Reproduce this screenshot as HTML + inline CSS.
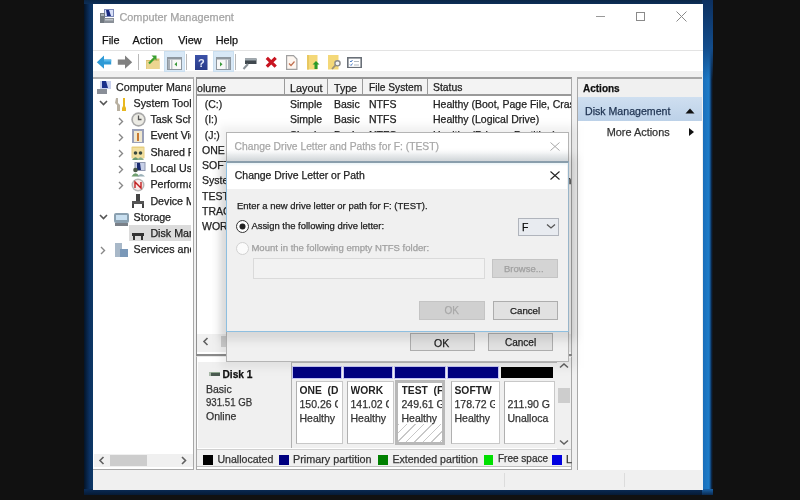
<!DOCTYPE html><html><head><meta charset="utf-8"><style>
html,body{margin:0;padding:0;width:800px;height:500px;overflow:hidden;background:#111;}
body{position:relative;font-family:"Liberation Sans", sans-serif;}
div,svg{position:absolute;}
.t{white-space:nowrap;-webkit-text-stroke:0.25px currentColor;}
</style></head><body>
<div id="root" style="left:0;top:0;width:800px;height:500px;overflow:hidden;background:#111;will-change:transform;filter:blur(0.4px);">
<div style="left:0px;top:0px;width:800px;height:500px;background:#111;"></div>
<div style="left:84px;top:0px;width:629px;height:495px;background:#0a2a50;"></div>
<div style="left:84px;top:0px;width:9px;height:495px;background:linear-gradient(90deg,#041428,#0b3060 60%,#0d3866);"></div>
<div style="left:84px;top:0px;width:629px;height:4px;background:linear-gradient(180deg,#0a2646,#0d2f58);"></div>
<div style="left:702px;top:0px;width:11px;height:495px;background:linear-gradient(90deg,#1a6cb8 0,#1e7cc8 60%,#1a6ab0 70%,#0a2a50 85%,#111 100%);"></div>
<div style="left:702px;top:0px;width:11px;height:80px;background:linear-gradient(180deg,#0c3060,#134d8c 60%,rgba(19,77,140,0));"></div>
<div style="left:84px;top:489px;width:629px;height:6px;background:linear-gradient(180deg,#0a2c58,#061a34);"></div>
<div style="left:702px;top:489px;width:11px;height:6px;background:linear-gradient(180deg,#1a62a8,#0a2a50);"></div>
<div style="left:92.5px;top:3.5px;width:610px;height:486.5px;background:#fff;"></div>
<svg style="left:100px;top:8px" width="15" height="16" viewBox="0 0 15 16"><rect x="4" y="1" width="10" height="8" fill="#7a88b8"/><rect x="5" y="2" width="8" height="6" fill="#d8e0f8"/><path d="M6 2 L9 2 L11 8 L7 8 Z" fill="#1a2a80"/><rect x="0" y="5" width="5" height="10" fill="#707880"/><rect x="1" y="6" width="3" height="2" fill="#a8b0b8"/><rect x="4" y="10" width="10" height="5" fill="#8a9098"/><rect x="5" y="11" width="8" height="1.5" fill="#c0c6cc"/></svg>
<div class="t" style="left:119.4px;top:12.17px;font-size:10.9px;line-height:10.9px;color:#a4a4a4;">Computer Management</div>
<div style="left:595.5px;top:16px;width:9px;height:1px;background:#999;"></div>
<div style="left:635.5px;top:12.2px;width:9.5px;height:8.8px;border:1px solid #8a8a8a;box-sizing:border-box;"></div>
<svg style="left:676px;top:11px" width="11" height="11" viewBox="0 0 11 11"><path d="M0.5 0.5 L10.5 10.5 M10.5 0.5 L0.5 10.5" stroke="#8a8a8a" stroke-width="1"/></svg>
<div class="t" style="left:102px;top:35.07px;font-size:10.9px;line-height:10.9px;color:#111;">File</div>
<div class="t" style="left:132.5px;top:35.07px;font-size:10.9px;line-height:10.9px;color:#111;">Action</div>
<div class="t" style="left:178.2px;top:35.07px;font-size:10.9px;line-height:10.9px;color:#111;">View</div>
<div class="t" style="left:215.7px;top:35.07px;font-size:10.9px;line-height:10.9px;color:#111;">Help</div>
<div style="left:93px;top:50px;width:610px;height:1px;background:#e3e3e3;"></div>
<div style="left:93px;top:51px;width:610px;height:20px;background:#fff;"></div>
<div style="left:93px;top:71px;width:610px;height:6px;background:#f0f0f0;"></div>
<div style="left:93px;top:77px;width:610px;height:413px;background:#f0f0f0;"></div>
<div style="left:93px;top:77px;width:101px;height:393px;background:#fff;border-top:2px solid #b0b0b0;border-right:1px solid #a8a8a8;border-bottom:1px solid #a8a8a8;box-sizing:border-box;"></div>
<div style="left:196px;top:77px;width:376px;height:279.5px;background:#fff;border:1px solid #a8a8a8;border-left:1.5px solid #909090;border-top:2px solid #959595;box-sizing:border-box;"></div>
<div style="left:197px;top:79px;width:374px;height:17px;background:#f3f3f3;border-bottom:2px solid #9a9a9a;box-sizing:border-box;"></div>
<div style="left:283.5px;top:79px;width:1.6px;height:16px;background:#9a9a9a;"></div>
<div style="left:326.5px;top:79px;width:1.6px;height:16px;background:#9a9a9a;"></div>
<div style="left:361.5px;top:79px;width:1.6px;height:16px;background:#9a9a9a;"></div>
<div style="left:426.5px;top:79px;width:1.6px;height:16px;background:#9a9a9a;"></div>
<div class="t" style="left:197px;top:83.03px;font-size:10.6px;line-height:10.6px;color:#222;">olume</div>
<div class="t" style="left:290px;top:82.86px;font-size:10.8px;line-height:10.8px;color:#222;">Layout</div>
<div class="t" style="left:334px;top:83.03px;font-size:10.6px;line-height:10.6px;color:#222;">Type</div>
<div class="t" style="left:369px;top:83.37px;font-size:10.2px;line-height:10.2px;color:#222;">File System</div>
<div class="t" style="left:433px;top:83.20px;font-size:10.4px;line-height:10.4px;color:#222;">Status</div>
<div style="left:197px;top:96px;width:374px;height:240px;overflow:hidden;"><div class="t" style="position:absolute;left:7.699999999999989px;top:2.91px;font-size:10.5px;line-height:10.5px;color:#222;">(C:)</div><div class="t" style="position:absolute;left:93px;top:2.91px;font-size:10.5px;line-height:10.5px;color:#222;">Simple</div><div class="t" style="position:absolute;left:137px;top:2.91px;font-size:10.5px;line-height:10.5px;color:#222;">Basic</div><div class="t" style="position:absolute;left:172px;top:2.91px;font-size:10.5px;line-height:10.5px;color:#222;">NTFS</div><div class="t" style="position:absolute;left:236px;top:2.91px;font-size:10.5px;line-height:10.5px;color:#222;">Healthy (Boot, Page File, Crash Dump, Primary Partition)</div><div class="t" style="position:absolute;left:7.699999999999989px;top:18.21px;font-size:10.5px;line-height:10.5px;color:#222;">(I:)</div><div class="t" style="position:absolute;left:93px;top:18.21px;font-size:10.5px;line-height:10.5px;color:#222;">Simple</div><div class="t" style="position:absolute;left:137px;top:18.21px;font-size:10.5px;line-height:10.5px;color:#222;">Basic</div><div class="t" style="position:absolute;left:172px;top:18.21px;font-size:10.5px;line-height:10.5px;color:#222;">NTFS</div><div class="t" style="position:absolute;left:236px;top:18.21px;font-size:10.5px;line-height:10.5px;color:#222;">Healthy (Logical Drive)</div><div class="t" style="position:absolute;left:7.699999999999989px;top:33.51px;font-size:10.5px;line-height:10.5px;color:#222;">(J:)</div><div class="t" style="position:absolute;left:93px;top:33.51px;font-size:10.5px;line-height:10.5px;color:#222;">Simple</div><div class="t" style="position:absolute;left:137px;top:33.51px;font-size:10.5px;line-height:10.5px;color:#222;">Basic</div><div class="t" style="position:absolute;left:172px;top:33.51px;font-size:10.5px;line-height:10.5px;color:#222;">NTFS</div><div class="t" style="position:absolute;left:236px;top:33.51px;font-size:10.5px;line-height:10.5px;color:#222;">Healthy (Primary Partition)</div><div class="t" style="position:absolute;left:5px;top:48.81px;font-size:10.5px;line-height:10.5px;color:#222;">ONE (D:)</div><div class="t" style="position:absolute;left:93px;top:48.81px;font-size:10.5px;line-height:10.5px;color:#222;">Simple</div><div class="t" style="position:absolute;left:137px;top:48.81px;font-size:10.5px;line-height:10.5px;color:#222;">Basic</div><div class="t" style="position:absolute;left:172px;top:48.81px;font-size:10.5px;line-height:10.5px;color:#222;">NTFS</div><div class="t" style="position:absolute;left:236px;top:48.81px;font-size:10.5px;line-height:10.5px;color:#222;">Healthy (Primary Partition)</div><div class="t" style="position:absolute;left:5px;top:64.11px;font-size:10.5px;line-height:10.5px;color:#222;">SOFTWARE</div><div class="t" style="position:absolute;left:93px;top:64.11px;font-size:10.5px;line-height:10.5px;color:#222;">Simple</div><div class="t" style="position:absolute;left:137px;top:64.11px;font-size:10.5px;line-height:10.5px;color:#222;">Basic</div><div class="t" style="position:absolute;left:172px;top:64.11px;font-size:10.5px;line-height:10.5px;color:#222;">NTFS</div><div class="t" style="position:absolute;left:236px;top:64.11px;font-size:10.5px;line-height:10.5px;color:#222;">Healthy (Primary Partition)</div><div class="t" style="position:absolute;left:5px;top:79.41px;font-size:10.5px;line-height:10.5px;color:#222;">System Reserved</div><div class="t" style="position:absolute;left:93px;top:79.41px;font-size:10.5px;line-height:10.5px;color:#222;">Simple</div><div class="t" style="position:absolute;left:137px;top:79.41px;font-size:10.5px;line-height:10.5px;color:#222;">Basic</div><div class="t" style="position:absolute;left:172px;top:79.41px;font-size:10.5px;line-height:10.5px;color:#222;">NTFS</div><div class="t" style="position:absolute;left:236px;top:79.41px;font-size:10.5px;line-height:10.5px;color:#222;">Healthy (System, Active, Primary Partition)</div><div class="t" style="position:absolute;left:5px;top:94.71px;font-size:10.5px;line-height:10.5px;color:#222;">TEST (F:)</div><div class="t" style="position:absolute;left:93px;top:94.71px;font-size:10.5px;line-height:10.5px;color:#222;">Simple</div><div class="t" style="position:absolute;left:137px;top:94.71px;font-size:10.5px;line-height:10.5px;color:#222;">Basic</div><div class="t" style="position:absolute;left:172px;top:94.71px;font-size:10.5px;line-height:10.5px;color:#222;">NTFS</div><div class="t" style="position:absolute;left:236px;top:94.71px;font-size:10.5px;line-height:10.5px;color:#222;">Healthy (Primary Partition)</div><div class="t" style="position:absolute;left:5px;top:110.01px;font-size:10.5px;line-height:10.5px;color:#222;">TRACK</div><div class="t" style="position:absolute;left:93px;top:110.01px;font-size:10.5px;line-height:10.5px;color:#222;">Simple</div><div class="t" style="position:absolute;left:137px;top:110.01px;font-size:10.5px;line-height:10.5px;color:#222;">Basic</div><div class="t" style="position:absolute;left:172px;top:110.01px;font-size:10.5px;line-height:10.5px;color:#222;">NTFS</div><div class="t" style="position:absolute;left:236px;top:110.01px;font-size:10.5px;line-height:10.5px;color:#222;">Healthy (Primary Partition)</div><div class="t" style="position:absolute;left:5px;top:125.31px;font-size:10.5px;line-height:10.5px;color:#222;">WORK</div><div class="t" style="position:absolute;left:93px;top:125.31px;font-size:10.5px;line-height:10.5px;color:#222;">Simple</div><div class="t" style="position:absolute;left:137px;top:125.31px;font-size:10.5px;line-height:10.5px;color:#222;">Basic</div><div class="t" style="position:absolute;left:172px;top:125.31px;font-size:10.5px;line-height:10.5px;color:#222;">NTFS</div><div class="t" style="position:absolute;left:236px;top:125.31px;font-size:10.5px;line-height:10.5px;color:#222;">Healthy (Primary Partition)</div></div>
<div style="left:197px;top:334px;width:374px;height:18px;background:#f0f0f0;"></div>
<svg style="left:201.5px;top:336.5px" width="8" height="9" viewBox="0 0 8 9"><path d="M5.5 1 L2 4.5 L5.5 8" stroke="#606060" stroke-width="1.6" fill="none"/></svg>
<div style="left:220.5px;top:335.5px;width:60px;height:11.5px;background:#cdcdcd;"></div>
<div style="left:196px;top:356px;width:376px;height:114px;background:#fff;border:1px solid #a8a8a8;border-top:1px solid #e8e8e8;box-sizing:border-box;"></div>
<div style="left:197px;top:358px;width:374px;height:92px;background:#fff;"></div>
<div style="left:196px;top:354.3px;width:376px;height:2px;background:#8a8a8a;"></div>
<div style="left:198px;top:362px;width:93px;height:86px;background:#f0f0f0;"></div>
<div style="left:208.5px;top:371.5px;width:11.5px;height:4px;background:#4a5a50;border-top:1px solid #90a890;box-sizing:border-box;"></div>
<div style="left:208.5px;top:371.5px;width:2.5px;height:4px;background:#a8b8a8;"></div>
<div class="t" style="left:222.5px;top:370.17px;font-size:10.2px;line-height:10.2px;color:#111;font-weight:bold;">Disk 1</div>
<div class="t" style="left:206px;top:383.61px;font-size:10.5px;line-height:10.5px;color:#333;">Basic</div>
<div class="t" style="left:206px;top:397.41px;font-size:10.5px;line-height:10.5px;color:#333;transform:scaleX(0.92);transform-origin:0 0;">931.51 GB</div>
<div class="t" style="left:206px;top:411.11px;font-size:10.5px;line-height:10.5px;color:#333;">Online</div>
<div style="left:291px;top:362px;width:266px;height:86px;background:#f0f0f0;"></div>
<div style="left:290.5px;top:362px;width:1px;height:86px;background:#b0b0b0;"></div>
<div style="left:290.5px;top:362px;width:266px;height:1px;background:#b8b8b8;"></div>
<div style="left:292px;top:365.5px;width:50px;height:13.5px;background:#c4c4f4;"></div>
<div style="left:293px;top:366.5px;width:48px;height:11.5px;background:#000080;"></div>
<div style="left:295.5px;top:380.5px;width:47px;height:63px;background:#fff;border:1px solid #c8c8c8;border-left-color:#b0b0b0;box-sizing:border-box;"></div>
<div style="left:299.5px;top:380px;width:38px;height:60px;overflow:hidden;"><div class="t" style="left:0;top:6.28px;font-size:10.3px;line-height:10.3px;font-weight:bold;color:#222;-webkit-text-stroke:0;">ONE&nbsp;&nbsp;(D</div><div class="t" style="left:0;top:19.41px;font-size:10.5px;line-height:10.5px;color:#333;">150.26 G</div><div class="t" style="left:0;top:33.11px;font-size:10.5px;line-height:10.5px;color:#333;">Healthy</div></div>
<div style="left:343px;top:365.5px;width:50px;height:13.5px;background:#c4c4f4;"></div>
<div style="left:344px;top:366.5px;width:48px;height:11.5px;background:#000080;"></div>
<div style="left:346.5px;top:380.5px;width:47px;height:63px;background:#fff;border:1px solid #c8c8c8;border-left-color:#b0b0b0;box-sizing:border-box;"></div>
<div style="left:350.5px;top:380px;width:38px;height:60px;overflow:hidden;"><div class="t" style="left:0;top:6.28px;font-size:10.3px;line-height:10.3px;font-weight:bold;color:#222;-webkit-text-stroke:0;">WORK</div><div class="t" style="left:0;top:19.41px;font-size:10.5px;line-height:10.5px;color:#333;">141.02 G</div><div class="t" style="left:0;top:33.11px;font-size:10.5px;line-height:10.5px;color:#333;">Healthy</div></div>
<div style="left:394px;top:365.5px;width:52px;height:13.5px;background:#c4c4f4;"></div>
<div style="left:395px;top:366.5px;width:50px;height:11.5px;background:#000080;"></div>
<div style="left:395px;top:379.5px;width:50px;height:65px;border:3px solid #b8b8b8;box-sizing:border-box;background:repeating-linear-gradient(135deg,#fff 0 5px,#c8c8c8 5px 6px);"></div>
<div style="left:398px;top:382.5px;width:44px;height:41px;background:#fff;"></div>
<div style="left:401.5px;top:380px;width:40px;height:60px;overflow:hidden;"><div class="t" style="left:0;top:6.28px;font-size:10.3px;line-height:10.3px;font-weight:bold;color:#222;-webkit-text-stroke:0;">TEST&nbsp;&nbsp;(F</div><div class="t" style="left:0;top:19.41px;font-size:10.5px;line-height:10.5px;color:#333;">249.61 G</div><div class="t" style="left:0;top:33.11px;font-size:10.5px;line-height:10.5px;color:#333;">Healthy</div></div>
<div style="left:447px;top:365.5px;width:52px;height:13.5px;background:#c4c4f4;"></div>
<div style="left:448px;top:366.5px;width:50px;height:11.5px;background:#000080;"></div>
<div style="left:450.5px;top:380.5px;width:49px;height:63px;background:#fff;border:1px solid #c8c8c8;border-left-color:#b0b0b0;box-sizing:border-box;"></div>
<div style="left:454.5px;top:380px;width:40px;height:60px;overflow:hidden;"><div class="t" style="left:0;top:6.28px;font-size:10.3px;line-height:10.3px;font-weight:bold;color:#222;-webkit-text-stroke:0;">SOFTW</div><div class="t" style="left:0;top:19.41px;font-size:10.5px;line-height:10.5px;color:#333;">178.72 G</div><div class="t" style="left:0;top:33.11px;font-size:10.5px;line-height:10.5px;color:#333;">Healthy</div></div>
<div style="left:501px;top:366.5px;width:52px;height:11.5px;background:#000000;"></div>
<div style="left:503.5px;top:380.5px;width:51px;height:63px;background:#fff;border:1px solid #c8c8c8;border-left-color:#b0b0b0;box-sizing:border-box;"></div>
<div style="left:507.5px;top:380px;width:42px;height:60px;overflow:hidden;"><div class="t" style="left:0;top:6.28px;font-size:10.3px;line-height:10.3px;font-weight:bold;color:#222;-webkit-text-stroke:0;"></div><div class="t" style="left:0;top:19.41px;font-size:10.5px;line-height:10.5px;color:#333;">211.90 G</div><div class="t" style="left:0;top:33.11px;font-size:10.5px;line-height:10.5px;color:#333;">Unalloca</div></div>
<div style="left:557px;top:358px;width:14px;height:92px;background:#f0f0f0;"></div>
<svg style="left:559px;top:362px" width="10" height="7" viewBox="0 0 10 7"><path d="M1 5.5 L5 2 L9 5.5" stroke="#606060" stroke-width="1.5" fill="none"/></svg>
<div style="left:558px;top:387.5px;width:12px;height:15.5px;background:#cdcdcd;"></div>
<svg style="left:559px;top:439px" width="10" height="7" viewBox="0 0 10 7"><path d="M1 1.5 L5 5 L9 1.5" stroke="#606060" stroke-width="1.5" fill="none"/></svg>
<div style="left:197px;top:449px;width:374px;height:1px;background:#d0d0d0;"></div>
<div style="left:197px;top:450px;width:374px;height:17px;background:#f0f0f0;border-bottom:1px solid #c0c0c0;box-sizing:border-box;"></div>
<div style="left:203px;top:454.5px;width:9.5px;height:10px;background:#000;"></div>
<div class="t" style="left:217.4px;top:453.83px;font-size:10.6px;line-height:10.6px;color:#333;">Unallocated</div>
<div style="left:279px;top:454.5px;width:9.5px;height:10px;background:#000080;"></div>
<div class="t" style="left:293px;top:453.66px;font-size:10.8px;line-height:10.8px;color:#333;">Primary partition</div>
<div style="left:378.4px;top:454.5px;width:9.5px;height:10px;background:#008000;"></div>
<div class="t" style="left:392.4px;top:453.83px;font-size:10.6px;line-height:10.6px;color:#333;">Extended partition</div>
<div style="left:483.6px;top:454.5px;width:9.5px;height:10px;background:#00e000;"></div>
<div class="t" style="left:498px;top:454.34px;font-size:10.0px;line-height:10.0px;color:#333;">Free&nbsp;space</div>
<div style="left:552px;top:454.5px;width:9.5px;height:10px;background:#0000e0;"></div>
<div class="t" style="left:566px;top:453.83px;font-size:10.6px;line-height:10.6px;color:#333;">L</div>
<div style="left:93px;top:79px;width:98px;height:374px;overflow:hidden;"><div style="left:36px;top:146px;width:64px;height:16px;background:#dcdcdc;"></div><svg style="position:absolute;left:4px;top:1px" width="14" height="14" viewBox="0 0 14 14"><rect x="0" y="9" width="10" height="5" fill="#8a8f98"/><rect x="3" y="1" width="11" height="8" fill="#c8d0ee"/><path d="M5 1 L9 1 L11 8 L5 8 Z" fill="#1a2f8a"/></svg><svg style="position:absolute;left:21px;top:18px" width="14" height="15" viewBox="0 0 14 15"><path d="M2 1 L4 1 L4 6 L6 8 L6 14 L3 14 L3 8 L1 6 Z" fill="#b8b0a0"/><path d="M9 1 L11 1 L11 9 L12 11 L12 14 L8 14 L8 11 L9 9 Z" fill="#e8b820"/></svg><svg style="position:absolute;left:38px;top:33px" width="15" height="15" viewBox="0 0 15 15"><circle cx="7.5" cy="7.5" r="7.2" fill="#a8a8a8"/><circle cx="7.5" cy="7.5" r="5.6" fill="#ecebe4"/><path d="M7.5 3.5 L7.5 7.5 L10.5 7.5" stroke="#555" stroke-width="1.3" fill="none"/></svg><svg style="position:absolute;left:38px;top:50px" width="14" height="14" viewBox="0 0 14 14"><rect x="1" y="0" width="12" height="14" fill="#9aa0b8"/><rect x="3" y="2" width="8" height="11" fill="#f0e8d0"/><path d="M6 4 L8 4 L8 12 L6 12Z" fill="#c87830"/></svg><svg style="position:absolute;left:38px;top:67px" width="14" height="14" viewBox="0 0 14 14"><rect x="0.5" y="0.5" width="13" height="12" rx="1" fill="#e8cf80"/><rect x="1.5" y="2" width="11" height="10" fill="#f2e0a0"/><circle cx="4.5" cy="7" r="1.8" fill="#3a4a40"/><circle cx="9.5" cy="7" r="1.8" fill="#3a4a40"/><path d="M1 14 Q4.5 8.5 8 14 Z" fill="#6a9a70"/><path d="M6 14 Q9.5 8.5 13 14 Z" fill="#8ab090"/></svg><svg style="position:absolute;left:38px;top:83px" width="15" height="15" viewBox="0 0 15 15"><rect x="4" y="0.5" width="10" height="8" fill="#c8d0e8"/><rect x="4" y="0.5" width="10" height="8" fill="none" stroke="#9098b0"/><path d="M6 1 L9 1 L10 8 L6 8 Z" fill="#1a2a70"/><circle cx="4.5" cy="8" r="2.3" fill="#4a5a48"/><path d="M0.5 14.5 Q4.5 8 8.5 14.5 Z" fill="#70a070"/><path d="M6 14.5 Q10 9.5 14 14.5 Z" fill="#9ab0b8"/></svg><svg style="position:absolute;left:38px;top:99px" width="14" height="14" viewBox="0 0 14 14"><circle cx="7" cy="7" r="6.5" fill="#b8b8b8"/><circle cx="7" cy="7" r="5" fill="#fbeaea"/><path d="M4 10 L4 4 L10 10 L10 4" stroke="#c02020" stroke-width="1.4" fill="none"/></svg><svg style="position:absolute;left:38px;top:115px" width="14" height="14" viewBox="0 0 14 14"><rect x="5" y="0" width="4" height="7" fill="#444"/><rect x="1" y="7" width="12" height="3" fill="#555"/><rect x="1" y="10" width="2" height="4" fill="#444"/><rect x="11" y="10" width="2" height="4" fill="#444"/></svg><svg style="position:absolute;left:21px;top:132px" width="15" height="15" viewBox="0 0 15 15"><rect x="0" y="2" width="15" height="10" rx="2" fill="#8aa0b0"/><rect x="2" y="4" width="11" height="5" fill="#c8dff0"/><rect x="1" y="12" width="13" height="3" fill="#7a8088"/></svg><svg style="position:absolute;left:38px;top:149px" width="14" height="14" viewBox="0 0 14 14"><rect x="1" y="5" width="12" height="3" fill="#333"/><rect x="2" y="8" width="2" height="4" fill="#333"/><rect x="10" y="8" width="2" height="4" fill="#333"/></svg><svg style="position:absolute;left:21px;top:164px" width="14" height="14" viewBox="0 0 14 14"><rect x="1" y="0" width="7" height="14" fill="#a8b8c8"/><rect x="6" y="6" width="8" height="8" fill="#7a98b8"/></svg><div class="t" style="left:23px;top:2.64px;font-size:10.7px;line-height:10.7px;color:#222;">Computer Management</div><div class="t" style="left:40.599999999999994px;top:18.84px;font-size:10.7px;line-height:10.7px;color:#222;">System Tools</div><svg style="left:6px;top:21.400000000000006px" width="9" height="6" viewBox="0 0 9 6"><path d="M1 1 L4.5 4.5 L8 1" stroke="#555" stroke-width="1.6" fill="none"/></svg><div class="t" style="left:57.400000000000006px;top:35.24px;font-size:10.7px;line-height:10.7px;color:#222;">Task Scheduler</div><svg style="left:24.799999999999997px;top:37.5px" width="6" height="9" viewBox="0 0 6 9"><path d="M1 1 L4.5 4.5 L1 8" stroke="#888" stroke-width="1.4" fill="none"/></svg><div class="t" style="left:57.400000000000006px;top:51.34px;font-size:10.7px;line-height:10.7px;color:#222;">Event Viewer</div><svg style="left:24.799999999999997px;top:53.60000000000001px" width="6" height="9" viewBox="0 0 6 9"><path d="M1 1 L4.5 4.5 L1 8" stroke="#888" stroke-width="1.4" fill="none"/></svg><div class="t" style="left:57.400000000000006px;top:67.54px;font-size:10.7px;line-height:10.7px;color:#222;">Shared Folders</div><svg style="left:24.799999999999997px;top:69.8px" width="6" height="9" viewBox="0 0 6 9"><path d="M1 1 L4.5 4.5 L1 8" stroke="#888" stroke-width="1.4" fill="none"/></svg><div class="t" style="left:57.400000000000006px;top:84.14px;font-size:10.7px;line-height:10.7px;color:#222;">Local Users and Groups</div><svg style="left:24.799999999999997px;top:86.39999999999999px" width="6" height="9" viewBox="0 0 6 9"><path d="M1 1 L4.5 4.5 L1 8" stroke="#888" stroke-width="1.4" fill="none"/></svg><div class="t" style="left:57.400000000000006px;top:100.14px;font-size:10.7px;line-height:10.7px;color:#222;">Performance</div><svg style="left:24.799999999999997px;top:102.39999999999999px" width="6" height="9" viewBox="0 0 6 9"><path d="M1 1 L4.5 4.5 L1 8" stroke="#888" stroke-width="1.4" fill="none"/></svg><div class="t" style="left:57.400000000000006px;top:116.54px;font-size:10.7px;line-height:10.7px;color:#222;">Device Manager</div><div class="t" style="left:40.599999999999994px;top:132.54px;font-size:10.7px;line-height:10.7px;color:#222;">Storage</div><svg style="left:6px;top:135.1px" width="9" height="6" viewBox="0 0 9 6"><path d="M1 1 L4.5 4.5 L8 1" stroke="#555" stroke-width="1.6" fill="none"/></svg><div class="t" style="left:57.400000000000006px;top:148.54px;font-size:10.7px;line-height:10.7px;color:#222;">Disk Management</div><div class="t" style="left:40.599999999999994px;top:164.74px;font-size:10.7px;line-height:10.7px;color:#222;">Services and Applications</div><svg style="left:7.299999999999997px;top:167.0px" width="6" height="9" viewBox="0 0 6 9"><path d="M1 1 L4.5 4.5 L1 8" stroke="#888" stroke-width="1.4" fill="none"/></svg></div>
<div style="left:94px;top:454px;width:99px;height:13px;background:#f0f0f0;"></div>
<svg style="left:98px;top:456px" width="8" height="9" viewBox="0 0 8 9"><path d="M5.5 1 L2 4.5 L5.5 8" stroke="#606060" stroke-width="1.6" fill="none"/></svg>
<div style="left:109.5px;top:455px;width:37px;height:11px;background:#cdcdcd;"></div>
<svg style="left:180px;top:456px" width="8" height="9" viewBox="0 0 8 9"><path d="M2 1 L5.5 4.5 L2 8" stroke="#606060" stroke-width="1.6" fill="none"/></svg>
<div style="left:577px;top:77px;width:125px;height:393px;background:#fff;border-left:1px solid #a8a8a8;border-top:2px solid #a8a8a8;box-sizing:border-box;"></div>
<div style="left:578px;top:79px;width:124px;height:18px;background:#f0f0f0;"></div>
<div class="t" style="left:583px;top:84.23px;font-size:10px;line-height:10px;color:#111;font-weight:bold;">Actions</div>
<div style="left:578px;top:97px;width:124px;height:24px;background:linear-gradient(180deg,#cfdff0,#bcd1e8);"></div>
<div class="t" style="left:585px;top:105.63px;font-size:10.6px;line-height:10.6px;color:#1e3250;">Disk Management</div>
<svg style="left:685px;top:108px" width="10" height="6" viewBox="0 0 10 6"><path d="M0.5 5.5 L5 0.5 L9.5 5.5 Z" fill="#111"/></svg>
<div class="t" style="left:606.7px;top:127.07px;font-size:10.9px;line-height:10.9px;color:#333;">More Actions</div>
<svg style="left:689px;top:128px" width="5" height="8" viewBox="0 0 5 8"><path d="M0 0 L5 4 L0 8 Z" fill="#111"/></svg>
<div style="left:164px;top:51px;width:20.5px;height:20.5px;background:#d8e8f6;border:1px solid #cadff0;box-sizing:border-box;"></div>
<div style="left:213px;top:51px;width:20.5px;height:20.5px;background:#d8e8f6;border:1px solid #cadff0;box-sizing:border-box;"></div>
<svg style="left:96px;top:55px" width="16" height="15" viewBox="0 0 16 15"><path d="M0.8 7.2 L8 0.5 L8 4.6 L15.2 4.6 L15.2 9.6 L8 9.6 L8 13.8 Z" fill="#2f9ad6"/><path d="M8 4.6 L15.2 4.6 L15.2 6.5 L8 6.5 Z" fill="#58b8ea"/></svg>
<svg style="left:117px;top:55px" width="16" height="15" viewBox="0 0 16 15"><path d="M15.2 7.2 L8 0.5 L8 4.6 L0.8 4.6 L0.8 9.8 L8 9.8 L8 13.8 Z" fill="#808080"/></svg>
<div style="left:137.5px;top:54px;width:1.2px;height:16px;background:#b8b8b8;"></div>
<div style="left:186.3px;top:54px;width:1.2px;height:16px;background:#b8b8b8;"></div>
<div style="left:234.5px;top:54px;width:1.2px;height:16px;background:#b8b8b8;"></div>
<svg style="left:146px;top:54px" width="14" height="16" viewBox="0 0 14 16"><path d="M0 6 L5 6 L6 4.5 L13.5 4.5 L13.5 15 L0 15 Z" fill="#d8bf70"/><rect x="0.5" y="7" width="13" height="8" fill="#ecd590"/><path d="M3 9.5 L8.5 4" stroke="#3aa030" stroke-width="2.2" fill="none"/><path d="M5.5 1.5 L10.5 1.5 L10.5 6.5 Z" fill="#3aa030"/></svg>
<svg style="left:167px;top:57px" width="15" height="13" viewBox="0 0 15 13"><rect x="0" y="0" width="15" height="13" fill="#8e979f"/><rect x="1" y="2.5" width="13" height="9.5" fill="#f8f8f8"/><rect x="1" y="2.5" width="2" height="9.5" fill="#a8b0b8"/><rect x="4" y="2.5" width="1.5" height="9.5" fill="#c0c6cc"/><path d="M10 5 L7.5 7.2 L10 9.4 Z" fill="#3a9a3a"/></svg>
<svg style="left:195px;top:54.5px" width="12.5" height="15" viewBox="0 0 12.5 15"><defs><linearGradient id="hg" x1="0" y1="0" x2="0" y2="1"><stop offset="0" stop-color="#3c52a8"/><stop offset="1" stop-color="#283a88"/></linearGradient></defs><rect x="0" y="0" width="12.5" height="15" fill="url(#hg)"/><text x="3" y="12" font-size="11" font-family="Liberation Sans" font-weight="bold" fill="#e8ecf8">?</text></svg>
<svg style="left:216px;top:57px" width="15" height="13" viewBox="0 0 15 13"><rect x="0" y="0" width="15" height="13" fill="#8e979f"/><rect x="1" y="2.5" width="13" height="9.5" fill="#f8f8f8"/><rect x="12" y="2.5" width="2" height="9.5" fill="#a8b0b8"/><rect x="9.5" y="2.5" width="1.5" height="9.5" fill="#c0c6cc"/><path d="M4 5 L6.5 7.2 L4 9.4 Z" fill="#3a9a3a"/></svg>
<svg style="left:242px;top:57px" width="15" height="13" viewBox="0 0 15 13"><rect x="3" y="1.5" width="11.5" height="5.5" fill="#40484e"/><rect x="3" y="1.5" width="11.5" height="2" fill="#a0aab0"/><path d="M1.5 12 L6 7" stroke="#8a9298" stroke-width="2"/></svg>
<svg style="left:264.5px;top:56px" width="12.5" height="12.5" viewBox="0 0 12.5 12.5"><path d="M1.8 1.8 L10.7 10.7 M10.7 1.8 L1.8 10.7" stroke="#c81420" stroke-width="3.2"/></svg>
<svg style="left:286px;top:54.5px" width="11.5" height="15" viewBox="0 0 11.5 15"><path d="M0.6 0.6 L7.5 0.6 L10.9 4 L10.9 14.4 L0.6 14.4 Z" fill="#fdf6f0" stroke="#a0a0a0" stroke-width="1.2"/><path d="M3 8.5 L5 10.5 L8.5 6.5" stroke="#c07050" stroke-width="1.2" fill="none"/></svg>
<svg style="left:307px;top:55px" width="13" height="15" viewBox="0 0 13 15"><rect x="0" y="0" width="10.5" height="14.5" fill="#f4d878"/><rect x="0" y="0" width="2" height="14.5" fill="#e8c860"/><path d="M9 6 L12.5 9.5 L10.5 9.5 L10.5 14 L7.5 14 L7.5 9.5 L5.5 9.5 Z" fill="#2a9a2a"/></svg>
<svg style="left:328px;top:55px" width="13" height="15" viewBox="0 0 13 15"><rect x="0" y="0" width="10.5" height="14.5" fill="#f4d878"/><circle cx="9.5" cy="8.3" r="2.6" fill="#f4f4f4" stroke="#8a8a8a" stroke-width="1.4"/><path d="M7.6 10.2 L4 14" stroke="#9a9078" stroke-width="1.8"/></svg>
<svg style="left:346.5px;top:56.5px" width="15" height="11.5" viewBox="0 0 15 11.5"><rect x="0.8" y="0.8" width="13.4" height="9.9" fill="#fff" stroke="#6a7078" stroke-width="1.6"/><path d="M3 4 L4 5 L5.5 3 M3 7.5 L4 8.5 L5.5 6.5" stroke="#3a70c0" stroke-width="0.9" fill="none"/><path d="M7 4.5 L12 4.5 M7 8 L12 8" stroke="#b0b8c0" stroke-width="1"/></svg>
<div style="left:504px;top:473px;width:1px;height:14px;background:#dcdcdc;"></div>
<div style="left:624px;top:473px;width:1px;height:14px;background:#dcdcdc;"></div>
<div style="left:220px;top:126px;width:356px;height:242px;background:rgba(0,0,0,0.06);filter:blur(4px);"></div>
<div style="left:226px;top:131.5px;width:343px;height:230.5px;background:#f0f0f0;border:1px solid #b4b4b4;box-sizing:border-box;"></div>
<div style="left:227px;top:132.5px;width:341px;height:29px;background:linear-gradient(180deg,#fff 0,#fff 17px,#e4eaee 29px);"></div>
<div class="t" style="left:234.6px;top:141.98px;font-size:10.3px;line-height:10.3px;color:#a8a8a8;">Change Drive Letter and Paths for F: (TEST)</div>
<svg style="left:550px;top:142px" width="10" height="9" viewBox="0 0 10 9"><path d="M0.5 0.5 L9.5 8.5 M9.5 0.5 L0.5 8.5" stroke="#a8a8a8" stroke-width="1"/></svg>
<div style="left:409.5px;top:333px;width:65.5px;height:18px;background:#e1e1e1;border:1px solid #adadad;box-sizing:border-box;"></div>
<div class="t" style="left:434px;top:337.61px;font-size:10.5px;line-height:10.5px;color:#222;">OK</div>
<div style="left:488px;top:333px;width:65px;height:18px;background:#e1e1e1;border:1px solid #adadad;box-sizing:border-box;"></div>
<div class="t" style="left:505px;top:338.04px;font-size:10.0px;line-height:10.0px;color:#222;">Cancel</div>
<div style="left:220px;top:156px;width:356px;height:184px;background:rgba(0,0,0,0.10);filter:blur(4px);"></div>
<div style="left:226px;top:160.5px;width:342.5px;height:171.5px;background:#f0f0f0;border:1px solid #8ebfe0;border-right:1.5px solid #98b4c8;border-top:2px solid #8a9eac;box-sizing:border-box;"></div>
<div style="left:227px;top:162.5px;width:340px;height:26.5px;background:linear-gradient(180deg,#eaf4f8,#fff 3px);"></div>
<div class="t" style="left:234.8px;top:171.45px;font-size:10.45px;line-height:10.45px;color:#222;">Change Drive Letter or Path</div>
<svg style="left:550px;top:171px" width="10" height="9" viewBox="0 0 10 9"><path d="M0.5 0.5 L9.5 8.5 M9.5 0.5 L0.5 8.5" stroke="#222" stroke-width="1.1"/></svg>
<div class="t" style="left:237px;top:201.26px;font-size:9.5px;line-height:9.5px;color:#222;">Enter a new drive letter or path for F: (TEST).</div>
<svg style="left:236px;top:220px" width="13" height="13" viewBox="0 0 13 13"><circle cx="6.5" cy="6.5" r="6" fill="#fff" stroke="#333"/><circle cx="6.5" cy="6.5" r="3" fill="#222"/></svg>
<div class="t" style="left:251.4px;top:221.20px;font-size:9.45px;line-height:9.45px;color:#222;">Assign the following drive letter:</div>
<svg style="left:236px;top:242px" width="13" height="13" viewBox="0 0 13 13"><circle cx="6.5" cy="6.5" r="6" fill="#fbfbfb" stroke="#d0d0d0"/></svg>
<div class="t" style="left:251.4px;top:243.12px;font-size:9.55px;line-height:9.55px;color:#a0a0a0;">Mount in the following empty NTFS folder:</div>
<div style="left:518px;top:217.6px;width:41px;height:18.5px;background:#e8ebf0;border:1px solid #b0b4bc;box-sizing:border-box;"></div>
<div class="t" style="left:522px;top:222.11px;font-size:10.5px;line-height:10.5px;color:#111;">F</div>
<svg style="left:546px;top:223px" width="10" height="7" viewBox="0 0 10 7"><path d="M1 1.5 L5 5 L9 1.5" stroke="#555" stroke-width="1.3" fill="none"/></svg>
<div style="left:253px;top:258.4px;width:231.5px;height:20.4px;background:#f2f2f2;border:1px solid #dadada;box-sizing:border-box;"></div>
<div style="left:492.4px;top:259px;width:65.6px;height:18.6px;background:#d4d4d4;border:1px solid #c4c4c4;box-sizing:border-box;"></div>
<div class="t" style="left:504px;top:264.36px;font-size:9.5px;line-height:9.5px;color:#a0a0a0;">Browse...</div>
<div style="left:419.3px;top:300.5px;width:65.7px;height:19px;background:#d0d0d0;border:1px solid #c4c4c4;box-sizing:border-box;"></div>
<div class="t" style="left:444.5px;top:305.54px;font-size:10px;line-height:10px;color:#a8a8a8;">OK</div>
<div style="left:492.5px;top:300.5px;width:65.5px;height:19px;background:#e1e1e1;border:1px solid #adadad;box-sizing:border-box;"></div>
<div class="t" style="left:510px;top:305.79px;font-size:9.7px;line-height:9.7px;color:#222;">Cancel</div>
</div></body></html>
